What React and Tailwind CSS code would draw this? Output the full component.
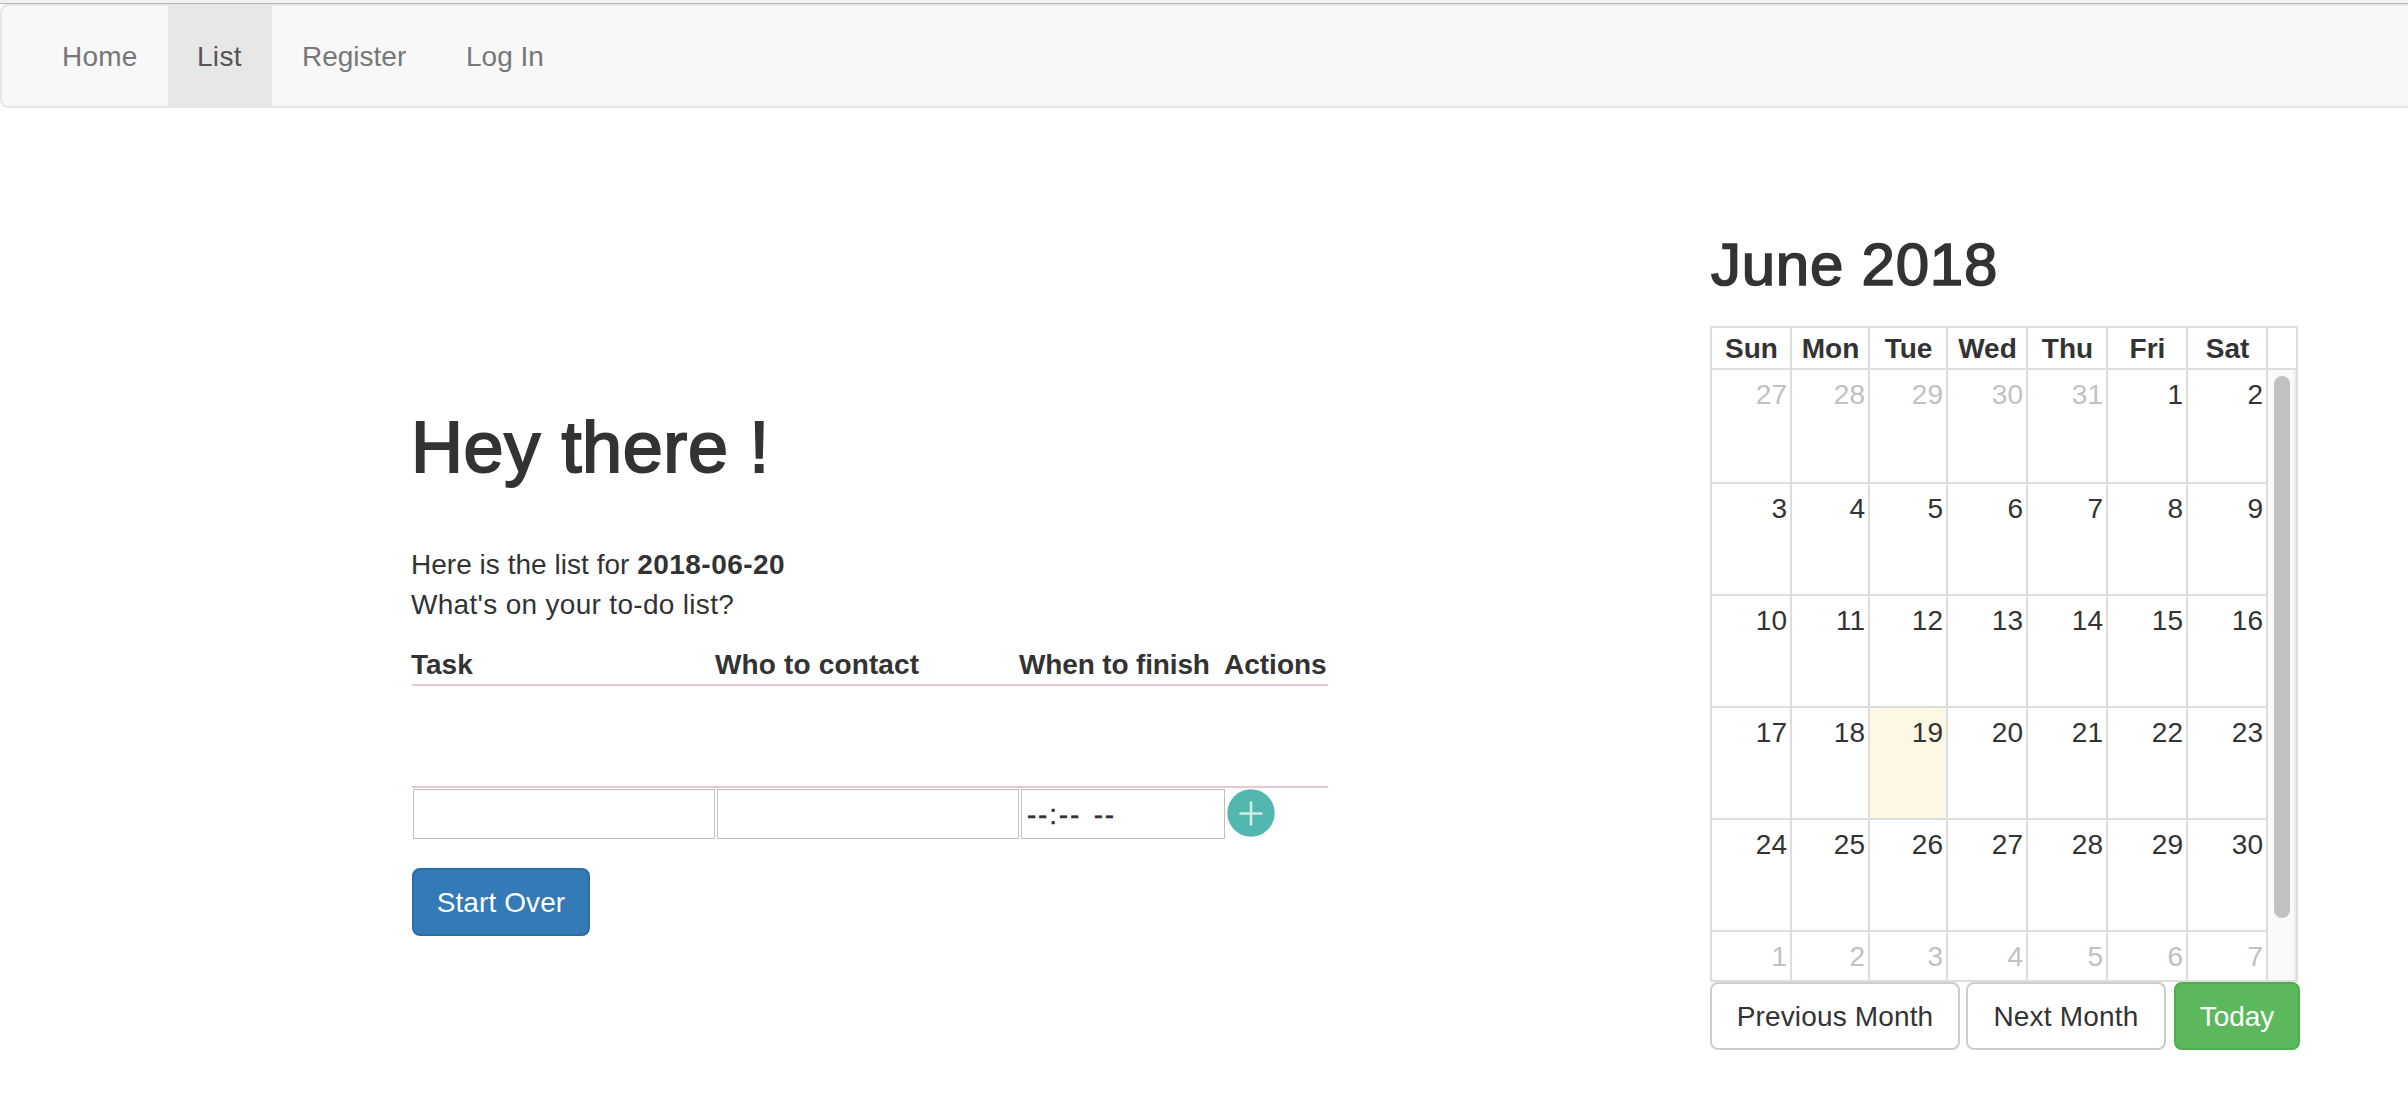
const NAV = [
  { label: "Home", cls: "w-[136px] pl-[30px] tracking-[0.2px]" },
  { label: "List", cls: "w-[104px] pl-[29px] tracking-[0.3px] bg-[#e7e7e7] text-[#555]" },
  { label: "Register", cls: "w-[164px] pl-[30px]" },
  { label: "Log In", cls: "w-[138px] pl-[30px]" },
];

const DAYS = ["Sun", "Mon", "Tue", "Wed", "Thu", "Fri", "Sat"];

const WEEKS = [
  { days: [27, 28, 29, 30, 31, 1, 2], h: "h-[114px] border-b-2" },
  { days: [3, 4, 5, 6, 7, 8, 9], h: "h-[112px] border-b-2" },
  { days: [10, 11, 12, 13, 14, 15, 16], h: "h-[112px] border-b-2" },
  { days: [17, 18, 19, 20, 21, 22, 23], h: "h-[112px] border-b-2" },
  { days: [24, 25, 26, 27, 28, 29, 30], h: "h-[112px] border-b-2" },
  { days: [1, 2, 3, 4, 5, 6, 7], h: "h-[48px]" },
];

const isOutside = (week, day) => (week === 0 && day > 20) || week === 5;

function TodoPanel() {
  return (
    <main className="ml-[412px] w-[916px] pt-[299px]">
      <h1 className="-ml-px h-[80px] text-[72px] leading-[80px] tracking-[0.6px] [-webkit-text-stroke:2px_#333]">Hey there !</h1>
      <p className="-ml-px mt-[58px] text-[28px] leading-[40px]">
        <span className="tracking-[0.03px]">Here is the list for </span>
        <b className="tracking-[0.45px]">2018-06-20</b>
        <br />
        <span className="tracking-[0.31px]">What's on your to-do list?</span>
      </p>
      <div className="mt-[20px] grid h-[41px] grid-cols-[304px_304px_204px_104px] border-b-2 border-[#ebc8cf] text-[28px] leading-[40px] font-bold whitespace-nowrap">
        <span className="-ml-px">Task</span>
        <span className="-ml-px tracking-[0.15px]">Who to contact</span>
        <span className="-ml-px tracking-[-0.15px]">When to finish</span>
        <span>Actions</span>
      </div>
      <div className="h-[102px] border-b-2 border-[#ebc8cf]" />
      <div className="mt-px ml-px flex gap-[2px]">
        <div className="h-[50px] w-[302px] border border-[#bdbfc0]" />
        <div className="h-[50px] w-[302px] border border-[#bdbfc0]" />
        <div className="h-[50px] w-[204px] border border-[#bdbfc0] pl-[5px] text-[28px] leading-[50px] tracking-[1.8px] whitespace-pre [word-spacing:3px] [-webkit-text-stroke:0.4px_#333]">--:-- --</div>
        <svg className="h-[48px] w-[48px]" viewBox="0 0 48 48">
          <circle cx="24" cy="24" r="23.7" fill="#52b7ae" />
          <path d="M24 12.5v24M12.5 24.5h23" stroke="#d3ebe6" strokeWidth="2.6" />
        </svg>
      </div>
      <button className="mt-[29px] block h-[68px] w-[178px] rounded-[8px] border-2 border-[#2e6da4] bg-[#337ab7] pt-px text-[28px] leading-[64px] tracking-[0.1px] text-white">
        Start Over
      </button>
    </main>
  );
}

function Calendar() {
  return (
    <aside className="ml-[382px] w-[590px] pt-[124px]">
      <h2 className="h-[66px] pl-px text-[60px] leading-[66px] tracking-[0.75px] [-webkit-text-stroke:1.6px_#333]">June 2018</h2>
      <div className="mt-[28px] h-[656px] w-[588px] border-2 border-[#ddd] text-[28px]">
        <div className="grid h-[42px] grid-cols-[80px_78px_78px_80px_80px_80px_80px_28px] border-b-2 border-[#ddd] text-center leading-[42px] font-bold">
          {DAYS.map((d) => (
            <div key={d} className="h-[40px] border-r-2 border-[#ddd] pl-px">{d}</div>
          ))}
        </div>
        <div className="flex h-[610px]">
          <div className="w-[556px]">
            {WEEKS.map((week, w) => (
              <div key={w} className={`grid grid-cols-[80px_78px_78px_80px_80px_80px_80px] border-[#ddd] ${week.h}`}>
                {week.days.map((day, i) => (
                  <div
                    key={i}
                    className={`border-r-2 border-[#ddd] pt-[5px] pr-[3px] text-right leading-[40px] ${isOutside(w, day) ? "text-[#c1c1c1]" : ""} ${w === 3 && day === 19 ? "bg-[#fcf8e3]" : ""}`}
                  >
                    {day}
                  </div>
                ))}
              </div>
            ))}
          </div>
          <div className="w-[28px] border-r-2 border-[#ececec] bg-[#fafafa] pt-[6px] pl-[6px]">
            <div className="h-[542px] w-[16px] rounded-full bg-[#c1c1c1]" />
          </div>
        </div>
      </div>
      <div className="flex text-[28px] leading-[64px]">
        <button className="h-[68px] w-[250px] rounded-[8px] border-2 border-[#ccc] pt-px tracking-[0.15px]">Previous Month</button>
        <button className="ml-[6px] h-[68px] w-[200px] rounded-[8px] border-2 border-[#ccc] pt-px tracking-[0.2px]">Next Month</button>
        <button className="ml-[8px] h-[68px] w-[126px] rounded-[8px] border-2 border-[#4cae4c] bg-[#5cb85c] pt-px text-white">Today</button>
      </div>
    </aside>
  );
}

export default function App() {
  return (
    <div className="h-[1118px] w-[2408px] overflow-hidden bg-white font-['Liberation_Sans',Arial,sans-serif] text-[#333]">
      <div className="h-[4px] border-b border-[#b4b4b4] bg-[#f1f1f1]" />
      <nav className="flex h-[104px] rounded-l-[8px] border-2 border-r-0 border-[#e7e7e7] bg-[#f8f8f8] pl-[30px] text-[28px] leading-[102px] text-[#777]">
        {NAV.map((n) => (
          <a key={n.label} className={`h-[100px] whitespace-nowrap ${n.cls}`}>{n.label}</a>
        ))}
      </nav>
      <div className="flex">
        <TodoPanel />
        <Calendar />
      </div>
    </div>
  );
}
